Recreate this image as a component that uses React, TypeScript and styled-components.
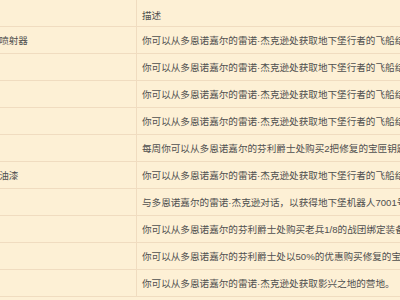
import styled, { createGlobalStyle } from 'styled-components'

// rows of the loot table, the first column is only filled where the source shows it
interface LootRow {
    name: string;
    description: string;
}

const rows: LootRow[] = [
    { name: "火箭喷射器", description: "你可以从多恩诺嘉尔的雷诺·杰克逊处获取地下堡行者的飞船结构图纸。" },
    { name: "", description: "你可以从多恩诺嘉尔的雷诺·杰克逊处获取地下堡行者的飞船结构图纸。" },
    { name: "", description: "你可以从多恩诺嘉尔的雷诺·杰克逊处获取地下堡行者的飞船结构图纸。" },
    { name: "", description: "你可以从多恩诺嘉尔的雷诺·杰克逊处获取地下堡行者的飞船结构图纸。" },
    { name: "", description: "每周你可以从多恩诺嘉尔的芬利爵士处购买2把修复的宝匣钥匙。" },
    { name: "红色油漆", description: "你可以从多恩诺嘉尔的雷诺·杰克逊处获取地下堡行者的飞船结构图纸。" },
    { name: "", description: "与多恩诺嘉尔的雷诺·杰克逊对话，以获得地下堡机器人7001号。" },
    { name: "", description: "你可以从多恩诺嘉尔的芬利爵士处购买老兵1/8的战团绑定装备。" },
    { name: "", description: "你可以从多恩诺嘉尔的芬利爵士处以50%的优惠购买修复的宝匣钥匙。" },
    { name: "", description: "你可以从多恩诺嘉尔的雷诺·杰克逊处获取影兴之地的营地。" },
]

const App = () => {
    return (
        <>
            <GlobalStyle />
            <Viewport>
                <Table>
                    <Cell $head></Cell>
                    <Cell $head>描述</Cell>
                    {rows.map((row, i) => (
                        <Row key={i}>
                            <Cell>{row.name}</Cell>
                            <Cell>{row.description}</Cell>
                        </Row>
                    ))}
                </Table>
            </Viewport>
        </>
    )
}

export default App

const GlobalStyle = createGlobalStyle`
    html, body {
        margin: 0;
        padding: 0;
        background: #fdf0d5;
        overflow: hidden;
    }
    body {
        font-family: "Liberation Sans", "Noto Sans CJK SC", sans-serif;
    }
`

const Viewport = styled.div`
    width: 400px;
    height: 300px;
    overflow: hidden;
    background: #fdf0d5;
`

// the screenshot is a crop of a wider table, so it starts a little left of the page
const Table = styled.div`
    display: grid;
    grid-template-columns: 162px max-content;
    margin-left: -25px;
    width: max-content;
    white-space: nowrap;
    font-size: 9.6px;
    color: #4f4f4f;
`

// rows only group the two cells; the grid does the placing
const Row = styled.div`
    display: contents;
`

const Cell = styled.div<{ $head?: boolean }>`
    height: 27px;
    box-sizing: border-box;
    display: flex;
    align-items: center;
    padding: ${(p) => (p.$head ? '3px 5px 0 5px' : '0 5px')};
    border-right: 1px solid #f0dcc0;
    border-bottom: 1px solid #f0dcc0;
`
